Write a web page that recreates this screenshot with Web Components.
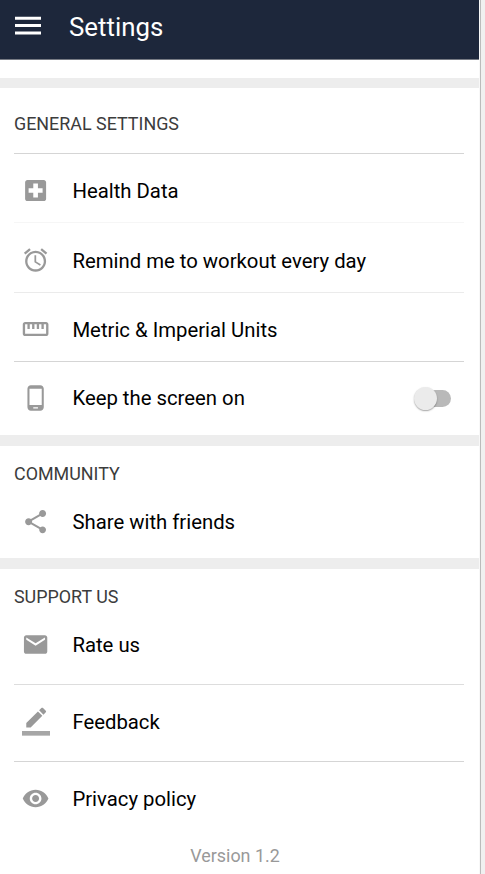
<!DOCTYPE html>
<html lang="en">
<head>
<meta charset="utf-8">
<title>Settings</title>
<style>
html, body { margin: 0; height: 100%; }
body { overflow: hidden; background: #f0f0f0; font-family: Roboto, "Liberation Sans", sans-serif; }
</style>
</head>
<body>
<settings-screen></settings-screen>
<script>
const ICONS = {
  health: '<path d="M19 3H5c-1.1 0-1.99.9-1.99 2L3 19c0 1.1.9 2 2 2h14c1.1 0 2-.9 2-2V5c0-1.1-.9-2-2-2zm-1 11h-4v4h-4v-4H6v-4h4V6h4v4h4v4z"/>',
  alarm: '<path d="M22 5.72l-4.6-3.86-1.29 1.53 4.6 3.86L22 5.72zM7.88 3.39L6.6 1.86 2 5.71l1.29 1.53 4.59-3.85zM12.5 8H11v6l4.75 2.85.75-1.23-4-2.37V8zM12 4c-4.97 0-9 4.03-9 9s4.02 9 9 9c4.97 0 9-4.03 9-9s-4.03-9-9-9zm0 16c-3.87 0-7-3.13-7-7s3.13-7 7-7 7 3.13 7 7-3.13 7-7 7z"/>',
  ruler: '<path d="M21 6H3c-1.1 0-2 .9-2 2v8c0 1.1.9 2 2 2h18c1.1 0 2-.9 2-2V8c0-1.1-.9-2-2-2zm0 10H3V8h2v4h2V8h2v4h2V8h2v4h2V8h2v4h2V8h2v8z"/>',
  phone: '<path d="M16 1H8C6.34 1 5 2.34 5 4v16c0 1.66 1.34 3 3 3h8c1.66 0 3-1.34 3-3V4c0-1.66-1.34-3-3-3zm-2 20h-4v-1h4v1zm3.25-3H6.75V4h10.5v14z"/>',
  share: '<path d="M18 16.08c-.76 0-1.44.3-1.96.77L8.91 12.7c.05-.23.09-.46.09-.7s-.04-.47-.09-.7l7.05-4.11c.54.5 1.25.81 2.04.81 1.66 0 3-1.34 3-3s-1.34-3-3-3-3 1.34-3 3c0 .24.04.47.09.7L8.04 9.81C7.5 9.31 6.79 9 6 9c-1.66 0-3 1.34-3 3s1.34 3 3 3c.79 0 1.5-.31 2.04-.81l7.12 4.16c-.05.21-.08.43-.08.65 0 1.61 1.31 2.92 2.92 2.92s2.92-1.31 2.92-2.92-1.31-2.92-2.92-2.92z"/>',
  mail: '<path d="M20 4H4c-1.1 0-1.99.9-1.99 2L2 18c0 1.1.9 2 2 2h16c1.1 0 2-.9 2-2V6c0-1.1-.9-2-2-2zm0 4l-8 5-8-5V6l8 5 8-5v2z"/>',
  pencil: '<path d="M17.75 7L14 3.25l-10 10V17h3.75l10-10zm2.96-2.96c.39-.39.39-1.02 0-1.41L18.37.29c-.39-.39-1.02-.39-1.41 0L15 2.25 18.75 6l1.96-1.96z"/><path fill="#a6a6a6" d="M.34 20h24v4h-24z"/>',
  eye: '<path d="M12 4.5C7 4.5 2.73 7.61 1 12c1.73 4.39 6 7.5 11 7.5s9.27-3.11 11-7.5c-1.73-4.39-6-7.5-11-7.5zM12 17c-2.76 0-5-2.24-5-5s2.24-5 5-5 5 2.24 5 5-2.24 5-5 5zm0-8c-1.66 0-3 1.34-3 3s1.34 3 3 3 3-1.34 3-3-1.34-3-3-3z"/>'
};

function define(name, render) {
  customElements.define(name, class extends HTMLElement {
    constructor() { super(); this.attachShadow({ mode: 'open' }); }
    connectedCallback() { this.shadowRoot.innerHTML = render(this); }
  });
}

define('app-bar', () => `
  <style>
    :host { display: flex; height: 59px; background: #1d273b; border-bottom: 1px solid #777b84; color: #fff; box-sizing: content-box; }
    svg { display: block; margin: 16px 0 0 15px; }
    h1 { margin: 12px 0 0 28px; font-size: 25.8px; line-height: 30px; font-weight: 400; }
  </style>
  <svg width="26" height="20" viewBox="0 0 26 20" fill="#fff"><path d="M0 .7h26v3H0zM0 8h26v3H0zM0 15.5h26v3H0z"/></svg>
  <h1><slot></slot></h1>`);

define('settings-group', el => `
  <style>
    :host { display: block; background: #fff; }
    h2 { margin: 0; padding: ${el.getAttribute('pad')}; font-size: 17.9px; line-height: 22px; font-weight: 400; color: #3c3c3c; white-space: nowrap; }
    h2.ruled { margin: 0 15px 0 14px; padding-left: 0; border-bottom: 1px solid #d5d5d5; }
  </style>
  <h2 class="${el.hasAttribute('ruled') ? 'ruled' : ''}">${el.getAttribute('heading')}</h2>
  <slot></slot>`);

define('section-gap', () => `
  <style>:host { display: block; height: var(--gap, 11px); background: #ededed; }</style>`);

define('settings-row', el => `
  <style>
    :host { display: flex; box-sizing: border-box; align-items: center; margin: 0 15px 0 14px;
      padding: ${el.getAttribute('top') || 0}px 0 ${el.getAttribute('bottom') || 0}px 8px;
      height: ${el.getAttribute('h')}px; border-bottom: 1px solid ${el.getAttribute('line') || 'transparent'}; }
    svg { flex: none; width: 28px; height: 28px; fill: #999; overflow: visible; }
    .label { flex: 1; margin-left: 22.4px; padding-top: ${el.getAttribute('drop') || 0}px; font-size: 20.32px; line-height: 26px; color: #000; white-space: nowrap; }
  </style>
  <svg viewBox="0.34 ${el.getAttribute('lift') || 0} 24 24">${ICONS[el.getAttribute('icon')]}</svg>
  <span class="label"><slot></slot></span>
  <slot name="control"></slot>`);

define('toggle-switch', () => `
  <style>
    :host { display: block; margin-right: 13px; }
    .track { display: flex; align-items: center; width: 37px; height: 24px; }
    .rail { width: 31px; height: 17px; margin-left: 6px; border-radius: 9px; background: #b9b9b9; display: flex; align-items: center; }
    .knob { flex: none; width: 23px; height: 23px; margin-left: -6px; border-radius: 50%; background: #ebebeb; box-shadow: 0 1px 1.5px rgba(0,0,0,.35); }
  </style>
  <div class="track"><div class="rail"><div class="knob"></div></div></div>`);

define('settings-screen', () => `
  <style>
    :host { display: block; width: 479px; height: 874px; background: #fff; border-right: 1px solid #f8f8f8; box-shadow: 1px 0 #bbb; overflow: hidden; }
    .spacer { height: 18px; }
    footer { padding: 6px 9px 0 0; text-align: center; font-size: 17.9px; line-height: 22px; color: #999; }
  </style>
  <app-bar>Settings</app-bar>
  <div class="spacer"></div>
  <section-gap style="--gap:10px"></section-gap>
  <settings-group heading="GENERAL SETTINGS" pad="25px 0 18px 14px" ruled>
    <settings-row icon="health" h="69" line="#f6f6f6" top="6" lift=".43">Health Data</settings-row>
    <settings-row icon="alarm" h="70" line="#ebebeb" top="5" drop="2">Remind me to workout every day</settings-row>
    <settings-row icon="ruler" h="69" line="#d5d5d5" top="4" drop="2">Metric &amp; Imperial Units</settings-row>
    <settings-row icon="phone" h="73">Keep the screen on<toggle-switch slot="control"></toggle-switch></settings-row>
  </settings-group>
  <section-gap></section-gap>
  <settings-group heading="COMMUNITY" pad="17px 0 0 14px">
    <settings-row icon="share" h="73" top="2" lift=".3">Share with friends</settings-row>
  </settings-group>
  <section-gap></section-gap>
  <settings-group heading="SUPPORT US" pad="17px 0 0 14px">
    <settings-row icon="mail" h="77" line="#ddd" bottom="2" lift=".43">Rate us</settings-row>
    <settings-row icon="pencil" h="77" line="#d5d5d5" bottom="2" lift=".3">Feedback</settings-row>
    <settings-row icon="eye" h="77" bottom="2" lift=".43">Privacy policy</settings-row>
  </settings-group>
  <footer>Version 1.2</footer>`);
</script>
</body>
</html>
